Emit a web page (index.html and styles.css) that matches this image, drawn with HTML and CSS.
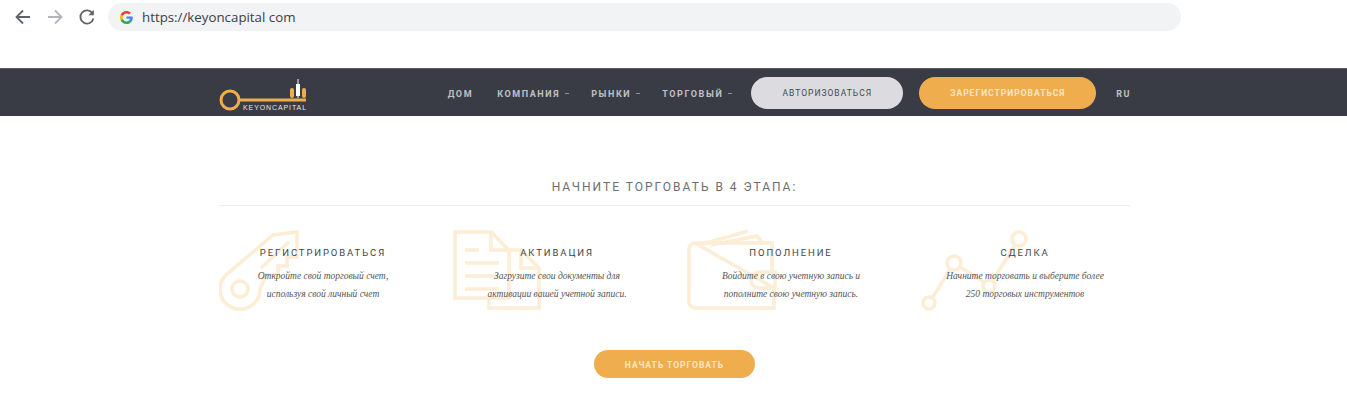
FILE: index.html
```html
<!DOCTYPE html>
<html lang="ru">
<head>
    <meta charset="UTF-8">
    <meta name="viewport" content="width=device-width, initial-scale=1.0">
    <title>Keyoncapital</title>
    <link rel="stylesheet" href="styles.css">
</head>
<body>
    <div class="browser-bar">
        <div class="browser-buttons">
            <svg width="18" height="18" viewBox="0 0 18 18"><path d="M16 9H3M9 2.500L2.500 9 9 15.500" fill="none" stroke="#5f6368" stroke-width="1.800"/></svg>
            <svg width="18" height="18" viewBox="0 0 18 18"><path d="M2 9h13M9 2.500L15.500 9 9 15.500" fill="none" stroke="#b4b6b9" stroke-width="1.800"/></svg>
            <svg width="18" height="18" viewBox="0 0 18 18"><path d="M14.600 5.500A6.600 6.600 0 1 0 15.400 10.500" fill="none" stroke="#5f6368" stroke-width="1.800"/><path d="M15.800 1.800v5.400h-5.400z" fill="#5f6368"/></svg>
        </div>
        <div class="address">
            <svg width="13" height="13" viewBox="0 0 48 48">
                <path fill="#ea4335" d="M24 9.500c3.500 0 6.700 1.200 9.200 3.600l6.900-6.900C35.900 2.400 30.500 0 24 0 14.600 0 6.500 5.400 2.600 13.200l8 6.200C12.500 13.700 17.800 9.500 24 9.500z"/>
                <path fill="#4285f4" d="M47 24.500c0-1.600-.1-3.100-.4-4.500H24v9h12.900c-.6 3-2.200 5.500-4.700 7.200l7.700 6c4.500-4.200 7.100-10.300 7.100-17.700z"/>
                <path fill="#fbbc05" d="M10.600 28.600A14.500 14.500 0 0 1 10.600 19.400l-8-6.200a24 24 0 0 0 0 21.600z"/>
                <path fill="#34a853" d="M24 48c6.500 0 11.900-2.100 15.900-5.800l-7.700-6c-2.200 1.400-4.900 2.300-8.200 2.300-6.200 0-11.500-4.200-13.400-9.900l-8 6.200C6.500 42.600 14.600 48 24 48z"/>
            </svg>
            <span>https://keyoncapital com</span>
        </div>
    </div>

    <nav class="topnav">
        <div class="topnav-inner">
            <a class="logo">
                <svg width="88" height="36" viewBox="0 0 88 36">
                    <circle cx="11" cy="21" r="9" fill="none" stroke="#f0ad4e" stroke-width="3"/>
                    <rect x="20" y="19.500" width="67" height="3" fill="#f0ad4e"/>
                    <rect x="71" y="9" width="4" height="10" rx="2" fill="#f0ad4e"/>
                    <rect x="77" y="5" width="4" height="12" fill="#fff"/>
                    <rect x="78.500" y="0" width="1" height="19" fill="#fff"/>
                    <rect x="83" y="9" width="4" height="10" rx="2" fill="#f0ad4e"/>
                </svg>
                <span class="logo-text">KEYONCAPITAL</span>
            </a>
            <div class="menu">
                <a class="menu-link">ДОМ</a>
                <a class="menu-link has-caret">КОМПАНИЯ</a>
                <a class="menu-link has-caret">РЫНКИ</a>
                <a class="menu-link has-caret">ТОРГОВЫЙ</a>
                <a class="btn btn-light">АВТОРИЗОВАТЬСЯ</a>
                <a class="btn btn-orange btn-register">ЗАРЕГИСТРИРОВАТЬСЯ</a>
                <a class="menu-link lang">RU</a>
            </div>
        </div>
    </nav>

    <section class="steps">
        <h2 class="steps-title">НАЧНИТЕ ТОРГОВАТЬ В 4 ЭТАПА:</h2>
        <div class="steps-grid">
            <div class="step">
                <svg class="step-icon" width="82" height="84" viewBox="0 0 82 84">
                    <g fill="none" stroke="#fcedd4" stroke-width="3.500">
                        <circle cx="21" cy="59" r="8"/>
                        <path d="M8 44L54 5l24-3v25H68v9h-9v9H47L41 59A20 20 0 1 1 8 44z"/>
                        <path d="M42 38L70 12"/>
                    </g>
                </svg>
                <h3 class="step-name">РЕГИСТРИРОВАТЬСЯ</h3>
                <p class="step-text">Откройте свой торговый счет,<br>используя свой личный счет</p>
            </div>
            <div class="step">
                <svg class="step-icon" width="88" height="82" viewBox="0 0 88 82">
                    <g fill="none" stroke="#fcedd4" stroke-width="3.500">
                        <path d="M2 2h36l18 18v48H2z"/>
                        <path d="M38 2v18h18"/>
                        <path d="M12 20h14M12 33h34M12 46h34M12 59h34"/>
                        <path d="M56 20h12l18 18v40H36V68"/>
                        <path d="M68 20v18h18"/>
                    </g>
                </svg>
                <h3 class="step-name">АКТИВАЦИЯ</h3>
                <p class="step-text">Загрузите свои документы для<br>активации вашей учетной записи.</p>
            </div>
            <div class="step">
                <svg class="step-icon" width="90" height="82" viewBox="0 0 90 82">
                    <g fill="none" stroke="#fcedd4" stroke-width="3.500">
                        <path d="M8 13H85V42M87 58V78H8a6 6 0 0 1-6-6V19a6 6 0 0 1 6-6z"/>
                        <path d="M12 15L61 1"/>
                        <path d="M24 15L70 6l6 7"/>
                        <path d="M88 42H72a8 8 0 0 0 0 16h16z"/>
                    </g>
                </svg>
                <h3 class="step-name">ПОПОЛНЕНИЕ</h3>
                <p class="step-text">Войдите в свою учетную запись и<br>пополните свою учетную запись.</p>
            </div>
            <div class="step">
                <svg class="step-icon" width="108" height="82" viewBox="0 0 108 82">
                    <g fill="none" stroke="#fcedd4" stroke-width="3.500">
                        <circle cx="8" cy="73" r="6"/>
                        <circle cx="33" cy="33" r="7"/>
                        <circle cx="68" cy="56" r="6"/>
                        <circle cx="98" cy="9" r="7"/>
                        <path d="M12 67L29 39M39 37L63 52M72 50L94 15"/>
                    </g>
                </svg>
                <h3 class="step-name">СДЕЛКА</h3>
                <p class="step-text">Начните торговать и выберите более<br>250 торговых инструментов</p>
            </div>
        </div>
        <div class="steps-action">
            <a class="btn btn-orange btn-start">НАЧАТЬ ТОРГОВАТЬ</a>
        </div>
    </section>
</body>
</html>
```

FILE: styles.css
```css
html, body {
    margin: 0;
    background-color: #ffffff;
}
body {
    font-family: Roboto, "Liberation Sans", sans-serif;
    height: 408px;
    overflow: hidden;
}
.browser-bar {
    height: 68px;
    box-sizing: border-box;
    padding: 3px 166px 0 14px;
    display: flex;
    align-items: flex-start;
}
.browser-buttons {
    display: flex;
    gap: 14px;
    width: 94px;
    height: 28px;
    align-items: center;
}
.address {
    flex: 1;
    height: 28px;
    background-color: #f1f3f4;
    border-radius: 14px;
    display: flex;
    align-items: center;
    padding-left: 12px;
    gap: 9px;
    font-family: "Open Sans", sans-serif;
    font-size: 13.300px;
    color: #3c4043;
}
.topnav {
    height: 48px;
    background-color: #393c44;
    border-top: 1px solid #5a5d63;
    box-sizing: border-box;
}
.topnav-inner {
    width: 911px;
    margin-left: 219px;
    height: 47px;
    display: flex;
    align-items: center;
    justify-content: space-between;
}
.logo {
    position: relative;
    display: block;
    width: 88px;
    height: 36px;
    margin-top: 8px;
}
.logo svg {
    display: block;
}
.logo-text {
    position: absolute;
    left: 24px;
    top: 25px;
    font-family: "Liberation Sans", sans-serif;
    font-size: 7px;
    line-height: 8px;
    letter-spacing: 0.900px;
    color: #e6e6e6;
}
.menu {
    display: flex;
    align-items: center;
}
.menu-link {
    padding-top: 2px;
    font-size: 9px;
    font-weight: 700;
    letter-spacing: 1.600px;
    color: #c0c1c4;
    margin-right: 24px;
}
.has-caret {
    margin-right: 22px;
}
.has-caret::after {
    content: "";
    display: inline-block;
    width: 4px;
    height: 1px;
    margin-left: 5px;
    vertical-align: 3px;
    background-color: #8f9094;
}
.menu .has-caret:nth-child(4) {
    margin-right: 19px;
}
.menu .lang {
    margin: 0 -1px 0 20px;
    letter-spacing: 1.500px;
}
.btn {
    display: flex;
    align-items: center;
    justify-content: center;
    box-sizing: border-box;
    height: 32px;
    padding-top: 1px;
    border-radius: 16px;
    font-size: 8.500px;
    letter-spacing: 1px;
}
.btn-light {
    width: 152px;
    margin-right: 16px;
    background-color: #dcdce0;
    color: #45474d;
    font-weight: 400;
}
.btn-orange {
    background-color: #f0ad4e;
    color: #fbe6c4;
    font-weight: 700;
}
.btn-register {
    width: 177px;
}
.steps {
    padding-top: 63px;
}
.steps-title {
    width: 911px;
    margin: 0 0 0 219px;
    padding-bottom: 10px;
    border-bottom: 1px solid #ececec;
    text-align: center;
    font-size: 12px;
    line-height: 16px;
    font-weight: 400;
    letter-spacing: 2px;
    color: #6e6e6e;
}
.steps-grid {
    display: grid;
    grid-template-columns: repeat(4, 234px);
    margin: 24px 0 0 206px;
}
.step {
    position: relative;
    height: 82px;
    text-align: center;
    padding-top: 16px;
}
.step-icon {
    position: absolute;
    left: 13px;
    top: 0;
}
.step-name {
    position: relative;
    margin: 0 0 7px;
    font-size: 9.500px;
    line-height: 14px;
    font-weight: 400;
    letter-spacing: 1.900px;
    color: #444444;
}
.step-text {
    position: relative;
    margin: 0;
    font-family: "Liberation Serif", serif;
    font-style: italic;
    font-size: 9.500px;
    line-height: 18px;
    color: #555555;
}
.steps-action {
    display: flex;
    justify-content: center;
    margin: 22px 0 0 2px;
}
.btn-start {
    width: 161px;
    height: 28px;
    padding-top: 2px;
    border-radius: 14px;
}
```
